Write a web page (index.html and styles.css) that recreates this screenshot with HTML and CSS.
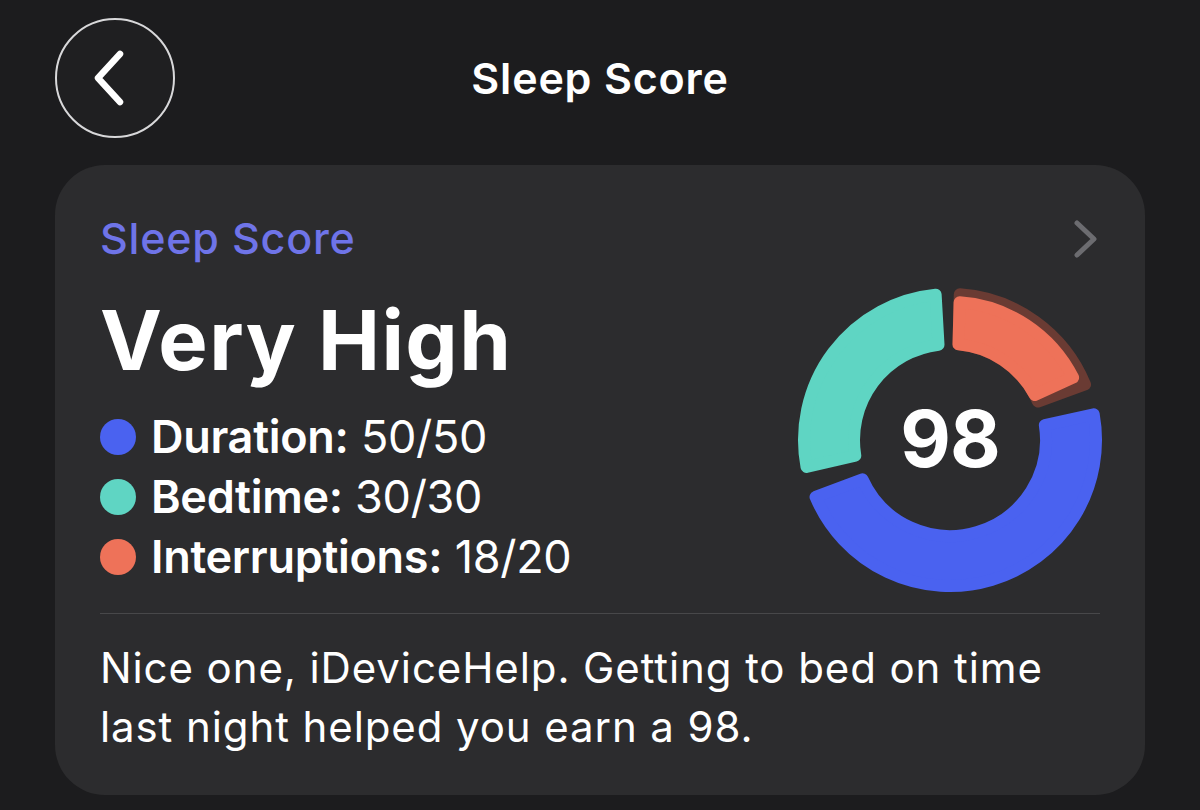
FILE: index.html
```html
<!DOCTYPE html>
<html lang="en">
<head>
<meta charset="utf-8">
<title>Sleep Score</title>
<link rel="stylesheet" href="styles.css">
</head>
<body>
<header class="nav">
  <button class="back" aria-label="Back">
    <svg width="40" height="60" viewBox="0 0 40 60"><path d="M30 6 L8 30 L30 54" fill="none" stroke="#fff" stroke-width="6.5" stroke-linecap="round" stroke-linejoin="round"/></svg>
  </button>
  <h1 class="nav-title">Sleep Score</h1>
  <span class="nav-spacer"></span>
</header>

<section class="card">
  <div class="card-head">
    <h2 class="card-title">Sleep Score</h2>
    <svg class="chev" width="32" height="40" viewBox="0 0 32 40"><path d="M6 4 L23 20 L6 36" fill="none" stroke="#6c6c70" stroke-width="5" stroke-linecap="round" stroke-linejoin="round"/></svg>
  </div>

  <div class="card-main">
    <div class="summary">
      <div class="level">Very High</div>
      <ul class="legend">
        <li class="legend-row"><span class="dot dot-blue"></span><b>Duration:</b>&nbsp;50/50</li>
        <li class="legend-row"><span class="dot dot-teal"></span><b>Bedtime:</b>&nbsp;30/30</li>
        <li class="legend-row"><span class="dot dot-orange"></span><b>Interruptions:</b>&nbsp;18/20</li>
      </ul>
    </div>
    <div class="ring">
      <svg width="310" height="310" viewBox="0 0 310 310">
        <g stroke-width="12" stroke-linejoin="round">
          <path fill="#5fd5c3" stroke="#5fd5c3" d="M 11.52 181.98 A 146 146 0 0 1 140.63 9.71 L 143.50 59.69 A 96 96 0 0 0 60.29 170.71 Z"/>
          <path fill="#6a3b33" stroke="#6a3b33" d="M 164.80 9.33 A 146 146 0 0 1 290.04 99.48 L 242.98 116.59 A 96 96 0 0 0 163.50 59.38 Z"/>
          <path fill="#ee7259" stroke="#ee7259" d="M 164.60 17.33 A 138 138 0 0 1 278.08 92.58 L 239.78 109.96 A 96 96 0 0 0 163.50 59.38 Z"/>
          <path fill="#4a62f0" stroke="#4a62f0" d="M 298.72 129.27 A 146 146 0 0 1 20.55 211.93 L 67.42 194.32 A 96 96 0 0 0 249.84 140.11 Z"/>
        </g>
      </svg>
      <span class="ring-value">98</span>
    </div>
  </div>

  <hr class="divider">

  <p class="message">Nice one, iDeviceHelp. Getting to bed on time<br>last night helped you earn a 98.</p>
</section>
</body>
</html>
```

FILE: styles.css
```css
* { box-sizing: border-box; }

html, body {
  margin: 0;
  padding: 0;
  background: #1c1c1e;
  color: #fff;
  font-family: Inter, "Noto Sans", "DejaVu Sans", sans-serif;
}

body {
  width: 1200px;
  height: 810px;
  overflow: hidden;
}

.nav {
  display: grid;
  grid-template-columns: 120px 1fr 120px;
  align-items: center;
  padding: 18px 55px 0;
}

.back {
  width: 120px;
  height: 120px;
  border-radius: 50%;
  border: 2px solid #d8d8da;
  background: #1f1f21;
  display: flex;
  align-items: center;
  justify-content: center;
  padding: 0;
  margin: 0;
}

.back svg { margin-left: -10px; }

.nav-title {
  margin: 0;
  text-align: center;
  font-size: 43px;
  font-weight: 600;
  line-height: 48px;
  letter-spacing: 0.8px;
}

.card {
  margin: 27px 55px 0;
  height: 630px;
  background: #2c2c2e;
  border-radius: 50px;
  padding: 49px 40px 0 45px;
}

.card-head {
  display: flex;
  justify-content: space-between;
  align-items: center;
  height: 48px;
}

.card-title {
  margin: 0;
  font-size: 43px;
  line-height: 48px;
  font-weight: 500;
  color: #6f74e8;
  letter-spacing: 0.8px;
}

.chev { margin-right: 2px; margin-top: 2px; }

.card-main {
  display: flex;
  justify-content: space-between;
  align-items: flex-start;
}

.summary { padding-top: 37px; }

.level {
  font-size: 83px;
  line-height: 82px;
  font-weight: 700;
  letter-spacing: 1.4px;
}

.legend {
  list-style: none;
  margin: 26px 0 0;
  padding: 0;
}

.legend-row {
  display: flex;
  align-items: center;
  height: 60px;
  font-size: 45px;
  line-height: 60px;
  font-weight: 400;
  letter-spacing: -0.3px;
}

.legend-row b { font-weight: 600; }

.dot {
  width: 36px;
  height: 36px;
  border-radius: 50%;
  margin: 0 15px 0 0;
  flex: none;
}

.dot-blue { background: #4a62f0; }
.dot-teal { background: #5fd5c3; }
.dot-orange { background: #ee7259; }

.ring {
  position: relative;
  width: 310px;
  height: 310px;
  margin-top: 23px;
}

.ring svg { display: block; }

.ring-value {
  position: absolute;
  inset: 0;
  display: flex;
  align-items: center;
  justify-content: center;
  font-size: 78px;
  font-weight: 700;
  letter-spacing: -1px;
  padding-bottom: 4px;
}

.divider {
  border: 0;
  height: 1px;
  background: #48484a;
  margin: 18px 5px 0 0;
}

.message {
  margin: 24px 0 0;
  font-size: 42px;
  line-height: 59px;
  font-weight: 400;
  letter-spacing: 0.9px;
}
```
